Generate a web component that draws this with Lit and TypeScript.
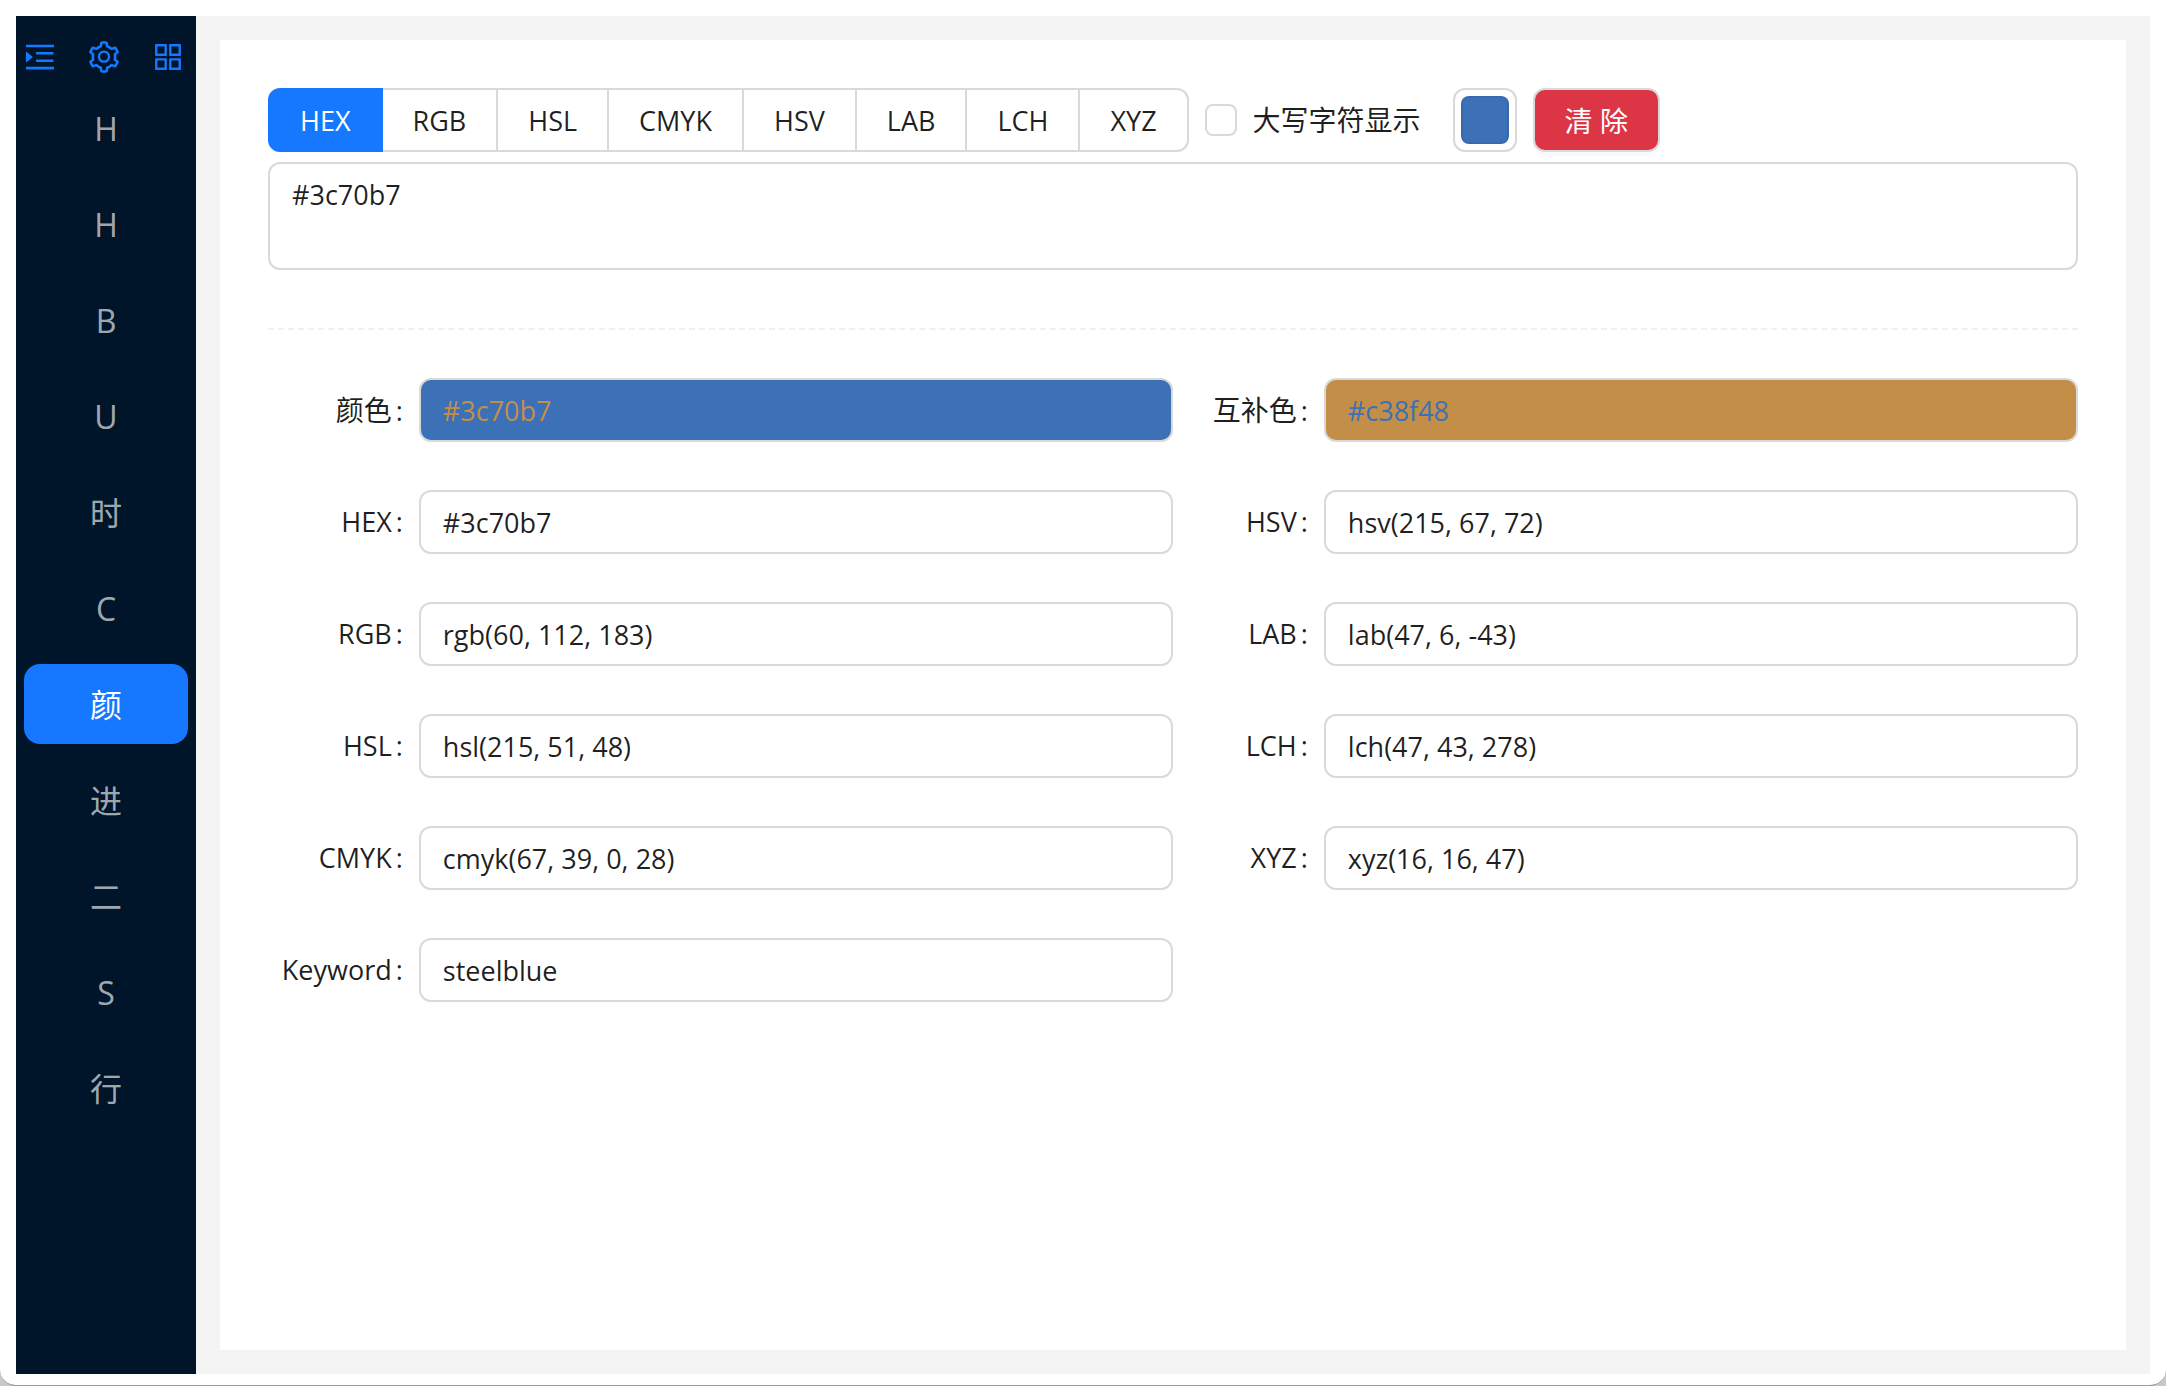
import { LitElement, html, css, svg } from "lit";
import { customElement, state } from "lit/decorators.js";
import { classMap } from "lit/directives/class-map.js";
import { styleMap } from "lit/directives/style-map.js";

const ICONS = {
  unfold:
    "M408 442h480c4.4 0 8-3.6 8-8v-56c0-4.4-3.6-8-8-8H408c-4.4 0-8 3.6-8 8v56c0 4.4 3.6 8 8 8zm-8 204c0 4.4 3.6 8 8 8h480c4.4 0 8-3.6 8-8v-56c0-4.4-3.6-8-8-8H408c-4.4 0-8 3.6-8 8v56zm504-486H120c-4.4 0-8 3.6-8 8v56c0 4.4 3.6 8 8 8h784c4.4 0 8-3.6 8-8v-56c0-4.4-3.6-8-8-8zm0 632H120c-4.4 0-8 3.6-8 8v56c0 4.4 3.6 8 8 8h784c4.4 0 8-3.6 8-8v-56c0-4.4-3.6-8-8-8zM126.4 658.1L302.7 519a8.84 8.84 0 000-13.9L126.4 365.9c-5.8-4.6-14.4-.5-14.4 6.9v278.3a8.9 8.9 0 0014.4 7z",
  setting:
    "M924.8 625.7l-65.5-56c3.1-19 4.7-38.4 4.7-57.8s-1.6-38.8-4.7-57.8l65.5-56a32.03 32.03 0 009.3-35.2l-.9-2.6a443.74 443.74 0 00-79.7-137.9l-1.8-2.1a32.12 32.12 0 00-35.1-9.5l-81.3 28.9c-30-24.6-63.5-44-99.7-57.6l-15.7-85a32.05 32.05 0 00-25.8-25.7l-2.7-.5c-52.1-9.4-106.9-9.4-159 0l-2.7.5a32.05 32.05 0 00-25.8 25.7l-15.8 85.4a351.86 351.86 0 00-99 57.4l-81.9-29.1a32 32 0 00-35.1 9.5l-1.8 2.1a446.02 446.02 0 00-79.7 137.9l-.9 2.6c-4.5 12.5-.8 26.5 9.3 35.2l66.3 56.6c-3.1 18.8-4.6 38-4.6 57.1 0 19.2 1.5 38.4 4.6 57.1L99 625.5a32.03 32.03 0 00-9.3 35.2l.9 2.6c18.1 50.4 44.9 96.9 79.7 137.9l1.8 2.1a32.12 32.12 0 0035.1 9.5l81.9-29.1c29.8 24.5 63.1 43.9 99 57.4l15.8 85.4a32.05 32.05 0 0025.8 25.7l2.7.5a449.4 449.4 0 00159 0l2.7-.5a32.05 32.05 0 0025.8-25.7l15.7-85a350 350 0 0099.7-57.6l81.3 28.9a32 32 0 0035.1-9.5l1.8-2.1c34.8-41.1 61.6-87.5 79.7-137.9l.9-2.6c4.5-12.3.8-26.3-9.3-35zM788.3 465.9c2.5 15.1 3.8 30.6 3.8 46.1s-1.3 31-3.8 46.1l-6.6 40.1 74.7 63.9a370.03 370.03 0 01-42.6 73.6L721 702.8l-31.4 25.8c-23.9 19.6-50.5 35-79.3 45.8l-38.1 14.3-17.9 97a377.5 377.5 0 01-85 0l-17.9-97.2-37.8-14.5c-28.5-10.8-55-26.2-78.7-45.7l-31.4-25.9-93.4 33.2c-17-22.9-31.2-47.6-42.6-73.6l75.5-64.5-6.5-40c-2.4-14.9-3.7-30.3-3.7-45.5 0-15.3 1.2-30.6 3.7-45.5l6.5-40-75.5-64.5c11.3-26.1 25.6-50.7 42.6-73.6l93.4 33.2 31.4-25.9c23.7-19.5 50.2-34.9 78.7-45.7l37.9-14.3 17.9-97.2c28.1-3.2 56.8-3.2 85 0l17.9 97 38.1 14.3c28.7 10.8 55.4 26.2 79.3 45.8l31.4 25.8 92.8-32.9c17 22.9 31.2 47.6 42.6 73.6L781.8 426l6.5 39.9zM512 326c-97.2 0-176 78.8-176 176s78.8 176 176 176 176-78.8 176-176-78.8-176-176-176zm79.2 255.2A111.6 111.6 0 01512 614c-29.9 0-58-11.7-79.2-32.8A111.6 111.6 0 01400 502c0-29.9 11.7-58 32.8-79.2C454 401.6 482.1 390 512 390c29.9 0 58 11.6 79.2 32.8A111.6 111.6 0 01624 502c0 29.9-11.7 58-32.8 79.2z",
  apps:
    "M464 144H160c-8.8 0-16 7.2-16 16v304c0 8.8 7.2 16 16 16h304c8.8 0 16-7.2 16-16V160c0-8.8-7.2-16-16-16zm-52 268H212V212h200v200zm452-268H560c-8.8 0-16 7.2-16 16v304c0 8.8 7.2 16 16 16h304c8.8 0 16-7.2 16-16V160c0-8.8-7.2-16-16-16zm-52 268H612V212h200v200zM464 544H160c-8.8 0-16 7.2-16 16v304c0 8.8 7.2 16 16 16h304c8.8 0 16-7.2 16-16V560c0-8.8-7.2-16-16-16zm-52 268H212V612h200v200zm452-268H560c-8.8 0-16 7.2-16 16v304c0 8.8 7.2 16 16 16h304c8.8 0 16-7.2 16-16V560c0-8.8-7.2-16-16-16zm-52 268H612V612h200v200z",
};

const icon = (d: string) =>
  html`<svg class="icon" viewBox="0 0 1024 1024" aria-hidden="true">${svg`<path d=${d}></path>`}</svg>`;

const MENU = ["H", "H", "B", "U", "时", "C", "颜", "进", "二", "S", "行"];
const FORMATS = ["HEX", "RGB", "HSL", "CMYK", "HSV", "LAB", "LCH", "XYZ"];

interface Field {
  id: string;
  label: string;
  value: string;
  fill?: string;
  ink?: string;
}

const BASE = "#3c70b7";
const COMPLEMENT = "#c38f48";

const FIELDS: Field[] = [
  { id: "color", label: "颜色", value: BASE, fill: BASE, ink: COMPLEMENT },
  { id: "complement", label: "互补色", value: COMPLEMENT, fill: COMPLEMENT, ink: BASE },
  { id: "hex", label: "HEX", value: BASE },
  { id: "hsv", label: "HSV", value: "hsv(215, 67, 72)" },
  { id: "rgb", label: "RGB", value: "rgb(60, 112, 183)" },
  { id: "lab", label: "LAB", value: "lab(47, 6, -43)" },
  { id: "hsl", label: "HSL", value: "hsl(215, 51, 48)" },
  { id: "lch", label: "LCH", value: "lch(47, 43, 278)" },
  { id: "cmyk", label: "CMYK", value: "cmyk(67, 39, 0, 28)" },
  { id: "xyz", label: "XYZ", value: "xyz(16, 16, 47)" },
  { id: "keyword", label: "Keyword", value: "steelblue" },
];

@customElement("side-menu")
class SideMenu extends LitElement {
  @state() private active = 6;

  static styles = css`
    :host {
      display: block;
      flex: none;
      width: 180px;
      background: #001529;
    }
    * {
      box-sizing: border-box;
    }
    .tools {
      display: flex;
      gap: 28px;
      padding: 23px 6px 13px;
    }
    .tool {
      display: block;
      border: 0;
      padding: 0;
      background: none;
      color: #1677ff;
      cursor: pointer;
    }
    .icon {
      display: block;
      width: 36px;
      height: 36px;
      fill: currentColor;
    }
    .menu {
      display: flex;
      flex-direction: column;
      gap: 16px;
      padding: 0 8px;
    }
    .item {
      display: block;
      height: 80px;
      border-radius: 16px;
      color: rgba(255, 255, 255, 0.65);
      font-size: 32px;
      line-height: 82px;
      text-align: center;
      text-decoration: none;
    }
    .item.active {
      background: #1677ff;
      color: #fff;
    }
  `;

  render() {
    return html`
      <div class="tools">
        <button class="tool" type="button" aria-label="展开菜单">${icon(ICONS.unfold)}</button>
        <button class="tool" type="button" aria-label="设置">${icon(ICONS.setting)}</button>
        <button class="tool" type="button" aria-label="应用">${icon(ICONS.apps)}</button>
      </div>
      <nav class="menu">
        ${MENU.map(
          (text, i) => html`<a
            href="#tool-${i}"
            class=${classMap({ item: true, active: i === this.active })}
            @click=${() => (this.active = i)}
            >${text}</a
          >`
        )}
      </nav>
    `;
  }
}

@customElement("app-root")
class AppRoot extends LitElement {
  @state() private format = "HEX";
  @state() private upper = false;
  @state() private source = BASE;

  static styles = css`
    :host {
      display: block;
      background: #c8c8c8;
      color: rgba(0, 0, 0, 0.88);
      font-family: "Open Sans", "Noto Sans CJK SC", sans-serif;
      font-size: 27px;
      line-height: 44px;
    }
    * {
      box-sizing: border-box;
    }
    input,
    textarea,
    button {
      font: inherit;
      color: inherit;
      margin: 0;
    }
    .window {
      display: flex;
      min-height: 100vh;
      padding: 16px 16px 11px;
      border-bottom: 1px solid #9c9c9c;
      border-radius: 0 0 16px 16px;
      background: #fff;
    }
    .body {
      display: flex;
      flex: 1;
      min-width: 0;
      padding: 24px;
      background: #f4f4f4;
    }
    .card {
      flex: 1;
      min-width: 0;
      padding: 48px;
      background: #fff;
    }
    .toolbar {
      display: flex;
      flex-wrap: wrap;
      align-items: center;
      gap: 16px;
      margin-bottom: 10px;
    }
    .formats {
      display: flex;
      border: 0;
      margin: 0;
      padding: 0;
    }
    .format {
      display: flex;
      height: 64px;
      padding: 9px 30px 7px;
      border: 2px solid #d9d9d9;
      border-left-width: 0;
      cursor: pointer;
    }
    .format:first-child {
      border-left-width: 2px;
      border-radius: 12px 0 0 12px;
    }
    .format:last-child {
      border-radius: 0 12px 12px 0;
    }
    .format.on {
      border-color: #1677ff;
      background: #1677ff;
      color: #fff;
    }
    .radio {
      appearance: none;
      width: 0;
      height: 0;
    }
    .cjk {
      font-size: 28px;
    }
    .check {
      display: flex;
      align-items: center;
      gap: 16px;
      margin-right: 16px;
      cursor: pointer;
    }
    .box {
      appearance: none;
      width: 32px;
      height: 32px;
      border: 2px solid #d9d9d9;
      border-radius: 8px;
      background: #fff;
    }
    .box:checked {
      border-color: #1677ff;
      background: #1677ff;
    }
    .picker {
      appearance: none;
      width: 64px;
      height: 64px;
      padding: 6px;
      border: 2px solid #d9d9d9;
      border-radius: 12px;
      background: #fff;
      cursor: pointer;
    }
    .picker::-webkit-color-swatch-wrapper {
      padding: 0;
    }
    .picker::-webkit-color-swatch {
      border: 2px solid rgba(0, 0, 0, 0.06);
      border-radius: 8px;
    }
    .clear {
      height: 64px;
      padding: 9px 30px 7px;
      border: 2px solid #d9d9d9;
      border-radius: 12px;
      background: #dc3545;
      box-shadow: 0 4px 0 rgba(0, 0, 0, 0.02);
      color: #fff;
      cursor: pointer;
    }
    .source {
      display: block;
      width: 100%;
      height: 108px;
      padding: 9px 22px 7px;
      border: 2px solid #d9d9d9;
      border-radius: 12px;
      background: #fff;
      resize: none;
    }
    .divider {
      margin: 58px 0 48px;
      border: 0;
      border-top: 2px dashed #f0f0f0;
    }
    .grid {
      display: grid;
      grid-template-columns: 1fr 1fr;
      row-gap: 48px;
    }
    .field {
      display: grid;
      grid-template-columns: 1fr 5fr;
      align-items: center;
    }
    .label {
      text-align: right;
      white-space: nowrap;
    }
    .colon {
      margin: 0 16px 0 4px;
    }
    .value {
      width: 100%;
      height: 64px;
      padding: 8px 22px;
      border: 2px solid #d9d9d9;
      border-radius: 12px;
      background: #fff;
    }
  `;

  private show(value: string) {
    return this.upper ? value.toUpperCase() : value;
  }

  private renderField(f: Field) {
    const tint = f.fill ? { background: f.fill, color: f.ink ?? "" } : {};
    const cjk = !/^[A-Z]/.test(f.label);
    return html`<div class="field">
      <label class="label" for=${f.id}
        ><span class=${classMap({ cjk })}>${f.label}</span><span class="colon">:</span></label
      >
      <input class="value" id=${f.id} readonly style=${styleMap(tint)} .value=${this.show(f.value)} />
    </div>`;
  }

  render() {
    return html`
      <div class="window">
        <side-menu></side-menu>
        <main class="body">
          <section class="card">
            <div class="toolbar">
              <div class="formats" role="radiogroup" aria-label="颜色格式">
                ${FORMATS.map(
                  (name) => html`<label class=${classMap({ format: true, on: name === this.format })}
                    ><input
                      class="radio"
                      type="radio"
                      name="format"
                      .checked=${name === this.format}
                      @change=${() => (this.format = name)}
                    />${name}</label
                  >`
                )}
              </div>
              <label class="check cjk"
                ><input
                  class="box"
                  type="checkbox"
                  .checked=${this.upper}
                  @change=${(e: Event) => (this.upper = (e.target as HTMLInputElement).checked)}
                />大写字符显示</label
              >
              <input class="picker" type="color" aria-label="选择颜色" .value=${BASE} />
              <button class="clear cjk" type="button" @click=${() => (this.source = "")}>清 除</button>
            </div>
            <textarea
              class="source"
              aria-label="颜色值"
              .value=${this.source}
              @input=${(e: Event) => (this.source = (e.target as HTMLTextAreaElement).value)}
            ></textarea>
            <hr class="divider" />
            <div class="grid">${FIELDS.map((f) => this.renderField(f))}</div>
          </section>
        </main>
      </div>
    `;
  }
}
